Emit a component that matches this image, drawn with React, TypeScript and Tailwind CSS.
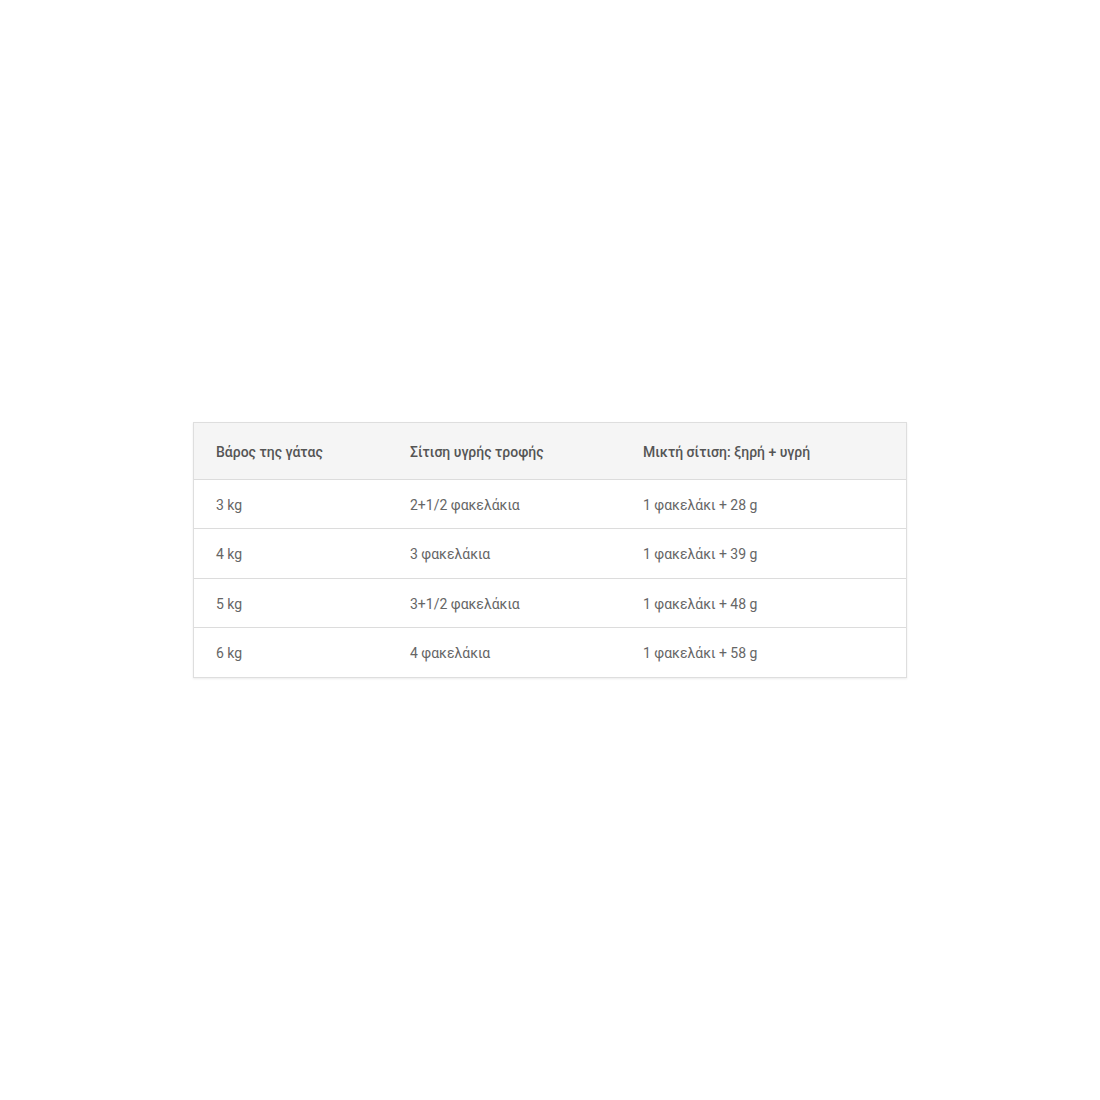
import React from "react";

const rows = [
  ["3 kg", "2+1/2 φακελάκια", "1 φακελάκι + 28 g"],
  ["4 kg", "3 φακελάκια", "1 φακελάκι + 39 g"],
  ["5 kg", "3+1/2 φακελάκια", "1 φακελάκι + 48 g"],
  ["6 kg", "4 φακελάκια", "1 φακελάκι + 58 g"],
];

export default function App() {
  return (
    <div
      className="w-[1100px] h-[1100px] bg-white pt-[422px] pl-[193px]"
      style={{ fontFamily: "Roboto, 'Noto Sans', sans-serif" }}
    >
      <div className="w-[714px] border border-[#dedede] shadow-[0_1px_2px_rgba(0,0,0,0.08)]">
        <div className="grid grid-cols-[194px_233px_1fr] h-[57px] items-center pt-[2px] bg-[#f5f5f5] border-b border-[#dcdcdc] text-[14px] font-medium text-[#555]">
          <div className="pl-[22px]">Βάρος της γάτας</div>
          <div className="pl-[22px]">Σίτιση υγρής τροφής</div>
          <div className="pl-[22px]">Μικτή σίτιση: ξηρή + υγρή</div>
        </div>
        {rows.map((r, i) => (
          <div
            key={i}
            className={`grid grid-cols-[194px_233px_1fr] items-center pt-[2px] text-[14px] text-[#666] ${
              i === 1 ? "h-[50px]" : "h-[49px]"
            } ${i < rows.length - 1 ? "border-b border-[#dcdcdc]" : ""}`}
          >
            <div className="pl-[22px]">{r[0]}</div>
            <div className="pl-[22px]">{r[1]}</div>
            <div className="pl-[22px]">{r[2]}</div>
          </div>
        ))}
      </div>
    </div>
  );
}
